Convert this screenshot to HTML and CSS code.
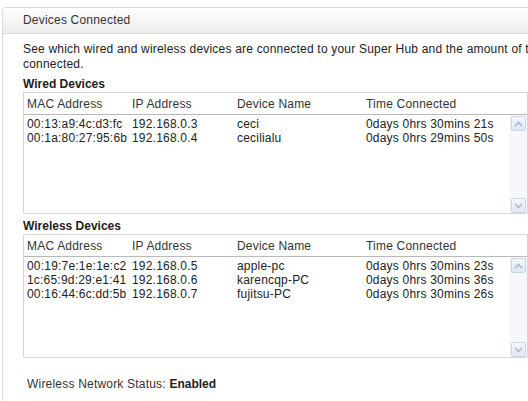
FILE: index.html
```html
<!DOCTYPE html>
<html>
<head>
    <title>Devices Connected</title>
    <link rel="stylesheet" href="styles.css">
</head>
<body>
    <div class="panel">
        <div class="panel-head">Devices Connected</div>
        <div class="panel-body">
            <p class="intro">See which wired and wireless devices are connected to your Super Hub and the amount of time they have been connected.</p>

            <h3 class="group-title">Wired Devices</h3>
            <div class="device-box">
                <div class="device-row head">
                    <span>MAC Address</span>
                    <span>IP Address</span>
                    <span>Device Name</span>
                    <span>Time Connected</span>
                </div>
                <div class="device-scroll">
                    <div class="device-list">
                        <div class="device-row">
                            <span>00:13:a9:4c:d3:fc</span>
                            <span>192.168.0.3</span>
                            <span>ceci</span>
                            <span>0days 0hrs 30mins 21s</span>
                        </div>
                        <div class="device-row">
                            <span>00:1a:80:27:95:6b</span>
                            <span>192.168.0.4</span>
                            <span>cecilialu</span>
                            <span>0days 0hrs 29mins 50s</span>
                        </div>
                    </div>
                    <div class="scrollbar">
                        <div class="scroll-btn">
                            <svg viewBox="0 0 9 6" width="9" height="6"><path d="M1 5 L4.5 1.5 L8 5" fill="none" stroke="#a9b8cf" stroke-width="1.6"/></svg>
                        </div>
                        <div class="scroll-btn">
                            <svg viewBox="0 0 9 6" width="9" height="6"><path d="M1 1 L4.5 4.5 L8 1" fill="none" stroke="#a9b8cf" stroke-width="1.6"/></svg>
                        </div>
                    </div>
                </div>
            </div>

            <h3 class="group-title spaced">Wireless Devices</h3>
            <div class="device-box">
                <div class="device-row head">
                    <span>MAC Address</span>
                    <span>IP Address</span>
                    <span>Device Name</span>
                    <span>Time Connected</span>
                </div>
                <div class="device-scroll tall">
                    <div class="device-list">
                        <div class="device-row">
                            <span>00:19:7e:1e:1e:c2</span>
                            <span>192.168.0.5</span>
                            <span>apple-pc</span>
                            <span>0days 0hrs 30mins 23s</span>
                        </div>
                        <div class="device-row">
                            <span>1c:65:9d:29:e1:41</span>
                            <span>192.168.0.6</span>
                            <span>karencqp-PC</span>
                            <span>0days 0hrs 30mins 36s</span>
                        </div>
                        <div class="device-row">
                            <span>00:16:44:6c:dd:5b</span>
                            <span>192.168.0.7</span>
                            <span>fujitsu-PC</span>
                            <span>0days 0hrs 30mins 26s</span>
                        </div>
                    </div>
                    <div class="scrollbar">
                        <div class="scroll-btn">
                            <svg viewBox="0 0 9 6" width="9" height="6"><path d="M1 5 L4.5 1.5 L8 5" fill="none" stroke="#a9b8cf" stroke-width="1.6"/></svg>
                        </div>
                        <div class="scroll-btn">
                            <svg viewBox="0 0 9 6" width="9" height="6"><path d="M1 1 L4.5 4.5 L8 1" fill="none" stroke="#a9b8cf" stroke-width="1.6"/></svg>
                        </div>
                    </div>
                </div>
            </div>

            <p class="status">Wireless Network Status: <strong>Enabled</strong></p>
        </div>
    </div>
</body>
</html>
```

FILE: styles.css
```css
* {
    margin: 0;
    padding: 0;
    box-sizing: border-box;
}

body {
    background: #ffffff;
    color: #222;
    font-family: 'Liberation Sans', Arial, sans-serif;
    font-size: 12px;
    letter-spacing: 0.2px;
    overflow: hidden;
}

.panel {
    width: 720px;
    margin: 7px 0 0 2px;
    border: 1px solid #dadada;
    border-radius: 4px 0 0 0;
    height: 420px;
}

.panel-head {
    height: 26px;
    line-height: 25px;
    padding-left: 20px;
    color: #333;
    background: linear-gradient(#ffffff, #ececec);
    border-bottom: 1px solid #dcdcdc;
    border-radius: 4px 0 0 0;
}

.panel-body {
    padding: 8px 0 0 20px;
}

.intro {
    line-height: 15px;
    max-width: 620px;
}

.group-title {
    font-size: 12px;
    font-weight: bold;
    letter-spacing: 0;
    line-height: 16px;
    margin-top: 4px;
    color: #222;
}

.device-box {
    width: 505px;
    border: 1px solid #d6d6d6;
}

.device-row {
    display: grid;
    grid-template-columns: 105px 105px 129px 1fr;
    line-height: 14px;
    padding-left: 3px;
    white-space: nowrap;
}

.device-row.head {
    padding-top: 4px;
    padding-bottom: 3px;
    color: #333;
    border-bottom: 1px solid #b9b9b9;
}

.device-scroll {
    display: flex;
    height: 98px;
}

.device-scroll.tall {
    height: 100px;
}

.device-list {
    flex: 1;
    padding-top: 2px;
}

.scrollbar {
    width: 17px;
    display: flex;
    flex-direction: column;
    justify-content: space-between;
    background: #f6f8fb;
    border-left: 1px solid #eef1f6;
    padding: 1px 2px 0 0;
}

.scroll-btn {
    width: 15px;
    height: 15px;
    border: 1px solid #cbd6e6;
    border-radius: 2px;
    background: linear-gradient(#f4f7fc, #dfe7f3);
    display: flex;
    align-items: center;
    justify-content: center;
}

.status {
    margin-top: 18px;
    padding-left: 4px;
    line-height: 16px;
    color: #333;
}

.status strong {
    color: #222;
    letter-spacing: 0;
}
```
